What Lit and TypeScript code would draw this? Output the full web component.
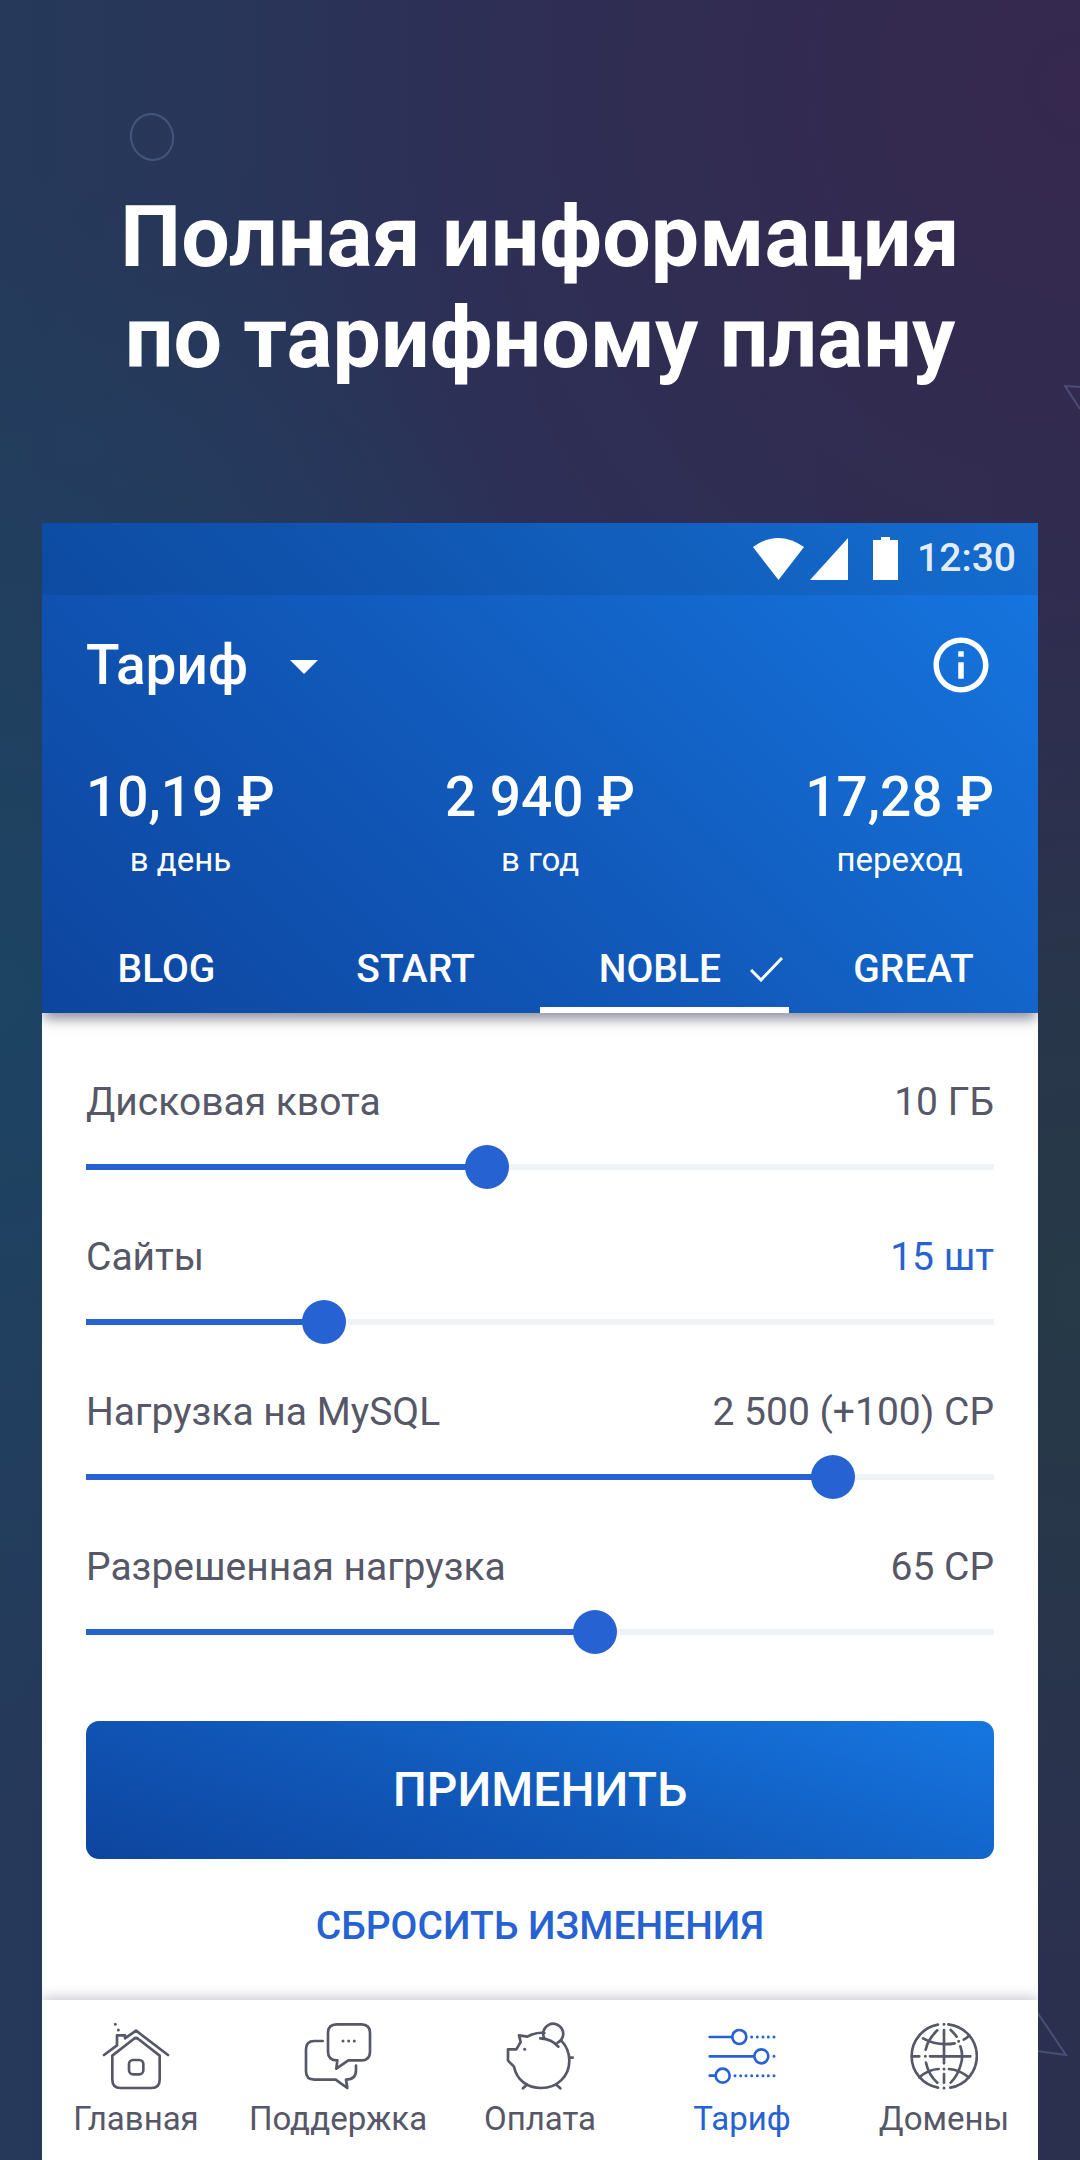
import { LitElement, html, css, svg } from "lit";
import { customElement, property, state } from "lit/decorators.js";
import { classMap } from "lit/directives/class-map.js";
import { styleMap } from "lit/directives/style-map.js";

const homeIcon = svg`
  <svg class="icon" viewBox="186 124 204 204" aria-hidden="true">
    <path d="M192 223 231 194V164H255V173L288 150 384 223M217 225 281 175Q288 169 295 175L359 225V297Q359 322 334 322H242Q217 322 217 297Z"/>
    <rect x="267" y="238" width="43" height="43" rx="12"/>
    <path class="dots" d="M226 131h0M235 148h0"/>
  </svg>`;

const chatIcon = svg`
  <svg class="icon" viewBox="793 124 204 204" aria-hidden="true">
    <path d="M849 181H824Q799 181 799 206V272Q799 297 824 297H888L923 322 919 297Q949 297 949 268V255"/>
    <path d="M891 131H965Q991 131 991 157V213Q991 239 965 239H926L890 264 893 239Q865 239 865 213V157Q865 131 891 131Z"/>
    <path class="dots" d="M910 181h0M927 181h0M944 181h0"/>
  </svg>`;

const piggyIcon = svg`
  <svg class="icon" viewBox="198 124 204 204" aria-hidden="true">
    <path d="M313 157Q289 153 262 168L237 164 242 184 229 206H204V240L222 258C230 298 262 322 304 322C352 322 388 286 388 240Q388 205 364 180M388 231H398M262 311 249 323M347 311 361 323"/>
    <path d="M301 173Q336 175 355 198M313 173A30 30 0 1 1 353 186"/>
    <path class="dots" d="M254 206h0"/>
  </svg>`;

const tariffIcon = svg`
  <svg class="icon" viewBox="804 124 204 204" aria-hidden="true">
    <path d="M809 169H874M809 227H941M809 285H824"/>
    <circle cx="898" cy="169" r="21"/>
    <circle cx="964" cy="227" r="21"/>
    <circle cx="848" cy="285" r="21"/>
    <path class="dots" d="M935 169h0M952 169h0M969 169h0M985 169h0M1002 169h0M1002 227h0M885 285h0M902 285h0M918 285h0M935 285h0M952 285h0M969 285h0M985 285h0M1002 285h0"/>
  </svg>`;

const globeIcon = svg`
  <svg class="icon" viewBox="390 124 204 204" aria-hidden="true">
    <path d="M474 132A96 96 0 0 0 474 321M505 131A96 96 0 0 1 511 321"/>
    <path d="M472 149Q443 177 437 207M438 246Q446 283 472 306M512 148Q523 158 530 168M541 197Q552 227 541 256Q533 285 512 306"/>
    <path d="M492 148V248M492 280V306M396 227H418M450 227H571"/>
    <path d="M429 173Q472 197 524 188M551 177Q562 171 568 164M418 290Q446 266 476 265M507 265Q538 267 566 290"/>
    <path class="dots" d="M492 131h0M492 322h0M436 227h0M492 265h0M536 182h0"/>
  </svg>`;

interface Quota {
  id: string;
  label: string;
  value: string;
  percent: number;
  changed?: boolean;
}

@customElement("quota-slider")
export class QuotaSlider extends LitElement {
  @property() label = "";
  @property() value = "";
  @property({ type: Number }) percent = 0;
  @property({ type: Boolean }) changed = false;

  static styles = css`
    :host {
      display: flex;
      flex-direction: column;
      gap: 21px;
    }
    .caption {
      display: flex;
      justify-content: space-between;
      font-size: 39px;
      line-height: 44px;
      color: #565767;
    }
    .changed {
      color: #2762d3;
    }
    .range {
      --fill: 0;
      appearance: none;
      -webkit-appearance: none;
      width: 100%;
      height: 44px;
      margin: 0;
      background: transparent;
    }
    .range::-webkit-slider-runnable-track {
      display: flex;
      align-items: center;
      height: 44px;
      background:
        linear-gradient(#2762d3, #2762d3) left center / calc(22px + (100% - 44px) * var(--fill)) 6px no-repeat,
        linear-gradient(#eff3f6, #eff3f6) center / 100% 6px no-repeat;
    }
    .range::-webkit-slider-thumb {
      -webkit-appearance: none;
      width: 44px;
      height: 44px;
      border-radius: 50%;
      background: #2762d3;
    }
  `;

  private onInput(e: Event) {
    this.percent = Number((e.target as HTMLInputElement).value);
  }

  render() {
    return html`
      <div class="caption">
        <label for="range">${this.label}</label>
        <output for="range" class=${classMap({ changed: this.changed })}>${this.value}</output>
      </div>
      <input
        id="range"
        class="range"
        type="range"
        min="0"
        max="100"
        step="any"
        .value=${String(this.percent)}
        style=${styleMap({ "--fill": String(this.percent / 100) })}
        @input=${this.onInput}
      />
    `;
  }
}

@customElement("app-root")
export class AppRoot extends LitElement {
  @state() private plan = "NOBLE";

  private plans = ["BLOG", "START", "NOBLE", "GREAT"];

  private prices = [
    { amount: "10,19 ₽", period: "в день" },
    { amount: "2 940 ₽", period: "в год" },
    { amount: "17,28 ₽", period: "переход" },
  ];

  private quotas: Quota[] = [
    { id: "disk", label: "Дисковая квота", value: "10 ГБ", percent: 43.9 },
    { id: "sites", label: "Сайты", value: "15 шт", percent: 25, changed: true },
    { id: "mysql", label: "Нагрузка на MySQL", value: "2 500 (+100) CP", percent: 83.9 },
    { id: "load", label: "Разрешенная нагрузка", value: "65 CP", percent: 56.4 },
  ];

  private sections = [
    { label: "Главная", icon: homeIcon },
    { label: "Поддержка", icon: chatIcon },
    { label: "Оплата", icon: piggyIcon },
    { label: "Тариф", icon: tariffIcon, current: true },
    { label: "Домены", icon: globeIcon },
  ];

  static styles = css`
    :host {
      display: block;
      font-family: Roboto, "Noto Sans", sans-serif;
      color: #fff;
    }
    * {
      box-sizing: border-box;
    }
    .page {
      position: relative;
      display: flex;
      flex-direction: column;
      min-height: 100vh;
      padding: 186px 42px 0;
      overflow: hidden;
      background:
        radial-gradient(ellipse 60% 38% at 0% 46%, #1d4463 0%, transparent 100%),
        radial-gradient(ellipse 80% 42% at 100% 4%, #36284f 0%, transparent 100%),
        radial-gradient(ellipse 50% 32% at 100% 60%, #263a47 0%, transparent 100%),
        linear-gradient(90deg, #26395a 0%, #2b3158 50%, #2b304f 100%);
    }
    .decor {
      position: absolute;
      fill: none;
      stroke: #8fa6d8;
      stroke-opacity: 0.28;
      stroke-width: 2;
    }
    .ring {
      left: 129px;
      top: 113px;
      width: 46px;
      height: 48px;
    }
    .corner {
      right: 0;
      top: 384px;
      width: 16px;
      height: 28px;
    }
    .spike {
      right: 12px;
      bottom: 102px;
      width: 32px;
      height: 50px;
    }
    .headline {
      margin: 0 0 135px;
      font-size: 86px;
      line-height: 101px;
      font-weight: 700;
      text-align: center;
    }
    .phone {
      position: relative;
      display: flex;
      flex-direction: column;
      flex: 1;
      background: #fff;
      overflow: hidden;
    }
    .top {
      background: linear-gradient(45deg, #0d459f 0%, #1159ba 45%, #1677e2 100%);
      box-shadow: 0 8px 12px -2px rgba(50, 52, 75, 0.55);
    }
    .status {
      display: flex;
      align-items: center;
      justify-content: flex-end;
      height: 72px;
      padding-right: 22px;
      background: rgba(0, 0, 0, 0.08);
      font-size: 39px;
      line-height: 44px;
      font-weight: 500;
    }
    .signals {
      width: 146px;
      height: 44px;
      margin-right: 18px;
      fill: #fff;
    }
    .clock {
      padding-bottom: 2px;
      color: rgba(255, 255, 255, 0.9);
    }
    .toolbar {
      display: flex;
      align-items: center;
      justify-content: space-between;
      height: 140px;
      padding: 0 44px;
    }
    .picker {
      display: grid;
      align-items: center;
    }
    .picker > * {
      grid-area: 1 / 1;
    }
    .select {
      appearance: none;
      -webkit-appearance: none;
      padding: 0 70px 0 0;
      border: 0;
      background: transparent;
      color: inherit;
      font: 500 55px/64px Roboto, sans-serif;
    }
    .caret {
      justify-self: end;
      width: 28px;
      height: 14px;
      margin-top: 4px;
      fill: #fff;
      pointer-events: none;
    }
    .info {
      width: 66px;
      height: 66px;
      padding: 0;
      border: 0;
      background: transparent;
      color: inherit;
    }
    .info-icon {
      display: block;
      width: 66px;
      height: 66px;
      fill: currentColor;
    }
    .prices {
      display: flex;
      justify-content: space-between;
      padding: 30px 44px 45px;
      text-align: center;
    }
    .price {
      display: flex;
      flex-direction: column;
      gap: 11px;
    }
    .amount {
      font-size: 55px;
      line-height: 64px;
      font-weight: 500;
    }
    .period {
      font-size: 33px;
      line-height: 40px;
    }
    .tabs {
      display: grid;
      grid-template-columns: repeat(4, minmax(0, 1fr));
    }
    .tab {
      display: flex;
      align-items: center;
      justify-content: center;
      gap: 29px;
      height: 88px;
      padding: 6px 0 0;
      border: 0;
      border-bottom: 6px solid transparent;
      background: transparent;
      color: inherit;
      font: 500 39px/44px Roboto, sans-serif;
    }
    .tab.active {
      justify-content: flex-end;
      padding-right: 6px;
      border-bottom-color: #fff;
    }
    .check {
      width: 33px;
      height: 26px;
      fill: none;
      stroke: #fff;
      stroke-width: 3;
    }
    .body {
      flex: 1;
      padding: 67px 44px 30px;
    }
    .quotas {
      display: flex;
      flex-direction: column;
      gap: 46px;
      margin-bottom: 67px;
    }
    .apply,
    .reset {
      display: block;
      width: 100%;
      border: 0;
      padding: 0;
    }
    .apply {
      height: 138px;
      border-radius: 13px;
      background: linear-gradient(18deg, #0d459f 0%, #1159ba 45%, #1677e2 100%);
      color: #fff;
      font: 500 48px/56px Roboto, sans-serif;
    }
    .reset {
      height: 88px;
      margin-top: 23px;
      background: transparent;
      color: #2762d3;
      font: 500 39px/44px Roboto, sans-serif;
    }
    .nav {
      display: flex;
      gap: 14px;
      padding: 22px 0 21px;
      background: #fff;
      box-shadow: 0 -3px 12px rgba(50, 52, 75, 0.25);
    }
    .section {
      display: flex;
      flex: 1 1 0;
      flex-direction: column;
      align-items: center;
      gap: 9px;
      color: #565767;
      font-size: 33px;
      line-height: 40px;
      text-decoration: none;
    }
    .section.current {
      color: #2762d3;
    }
    .icon {
      width: 68px;
      height: 68px;
      fill: none;
      stroke: currentColor;
      stroke-width: 8;
      stroke-linecap: round;
      stroke-linejoin: round;
    }
    .dots {
      stroke-width: 9;
    }
  `;

  render() {
    return html`
      <div class="page">
        <svg class="decor ring" viewBox="0 0 46 48" aria-hidden="true">
          <ellipse cx="23" cy="24" rx="21" ry="23" transform="rotate(-14 23 24)" />
        </svg>
        <svg class="decor corner" viewBox="0 0 16 28" aria-hidden="true">
          <path d="M16 3 1 2 16 25" />
        </svg>
        <svg class="decor spike" viewBox="0 0 32 50" aria-hidden="true">
          <path d="M1 4 30 47 1 43" />
        </svg>

        <h1 class="headline">Полная информация<br />по тарифному плану</h1>

        <main class="phone">
          <header class="top">
            <div class="status">
              <svg class="signals" viewBox="0 0 146 44" aria-hidden="true">
                <path d="M0 10Q25-8 51 10L25.500 43Z" />
                <path d="M95 1V43H57Z" />
                <path d="M120 3H128V0H137V3H145V43H120Z" />
              </svg>
              <span class="clock">12:30</span>
            </div>
            <div class="toolbar">
              <div class="picker">
                <select class="select" aria-label="Тариф">
                  <option>Тариф</option>
                </select>
                <svg class="caret" viewBox="0 0 28 14" aria-hidden="true"><path d="M0 0H28L14 14Z" /></svg>
              </div>
              <button class="info" type="button" aria-label="Информация">
                <svg class="info-icon" viewBox="0 0 24 24" aria-hidden="true">
                  <path
                    d="M11 7h2v2h-2zm0 4h2v6h-2zm1-9C6.480 2 2 6.480 2 12s4.480 10 10 10 10-4.480 10-10S17.520 2 12 2zm0 18c-4.410 0-8-3.590-8-8s3.590-8 8-8 8 3.590 8 8-3.590 8-8 8z"
                  />
                </svg>
              </button>
            </div>
            <div class="prices">
              ${this.prices.map(
                (p) => html`<div class="price">
                  <span class="amount">${p.amount}</span>
                  <span class="period">${p.period}</span>
                </div>`
              )}
            </div>
            <div class="tabs" role="tablist">
              ${this.plans.map((name) => {
                const active = name === this.plan;
                return html`<button
                  type="button"
                  role="tab"
                  aria-selected=${active ? "true" : "false"}
                  class=${classMap({ tab: true, active })}
                  @click=${() => (this.plan = name)}
                >
                  ${name}
                  ${active
                    ? html`<svg class="check" viewBox="0 0 33 26" aria-hidden="true">
                        <path d="M1 14 11 24 32 2" />
                      </svg>`
                    : ""}
                </button>`;
              })}
            </div>
          </header>

          <section class="body">
            <div class="quotas">
              ${this.quotas.map(
                (q) => html`<quota-slider
                  .label=${q.label}
                  .value=${q.value}
                  .percent=${q.percent}
                  .changed=${q.changed ?? false}
                ></quota-slider>`
              )}
            </div>
            <button class="apply" type="button">ПРИМЕНИТЬ</button>
            <button class="reset" type="button">СБРОСИТЬ ИЗМЕНЕНИЯ</button>
          </section>

          <nav class="nav">
            ${this.sections.map(
              (s) => html`<a href="#" class=${classMap({ section: true, current: !!s.current })}>
                ${s.icon}
                <span>${s.label}</span>
              </a>`
            )}
          </nav>
        </main>
      </div>
    `;
  }
}
